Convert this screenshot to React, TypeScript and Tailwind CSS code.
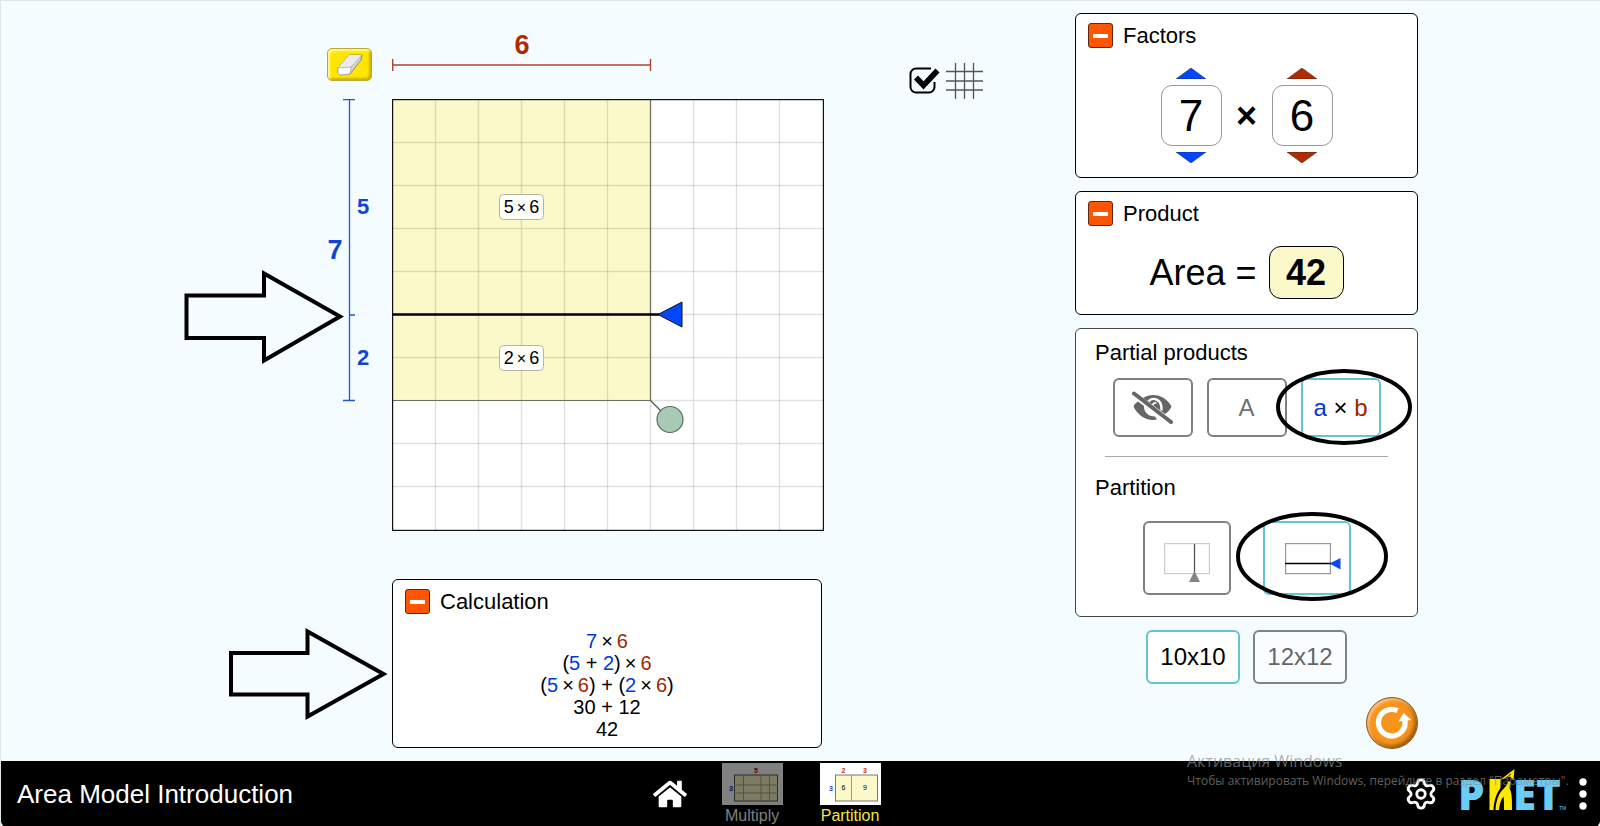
import { useState, type ReactNode } from "react";
import { FaHome } from "react-icons/fa";
import { Settings } from "lucide-react";

const CELL = 43;
const BLUE = "#0047ff";
const RED = "#b02b00";

function CollapseButton({ label }: { label: string }) {
  return (
    <button
      type="button"
      aria-label={`Collapse ${label}`}
      className="flex h-[25px] w-[25px] items-center justify-center rounded-[3px] border border-[#5a2a10] bg-[#ff5500]"
    >
      <span className="h-1 w-[15px] bg-white" />
    </button>
  );
}

function Panel({ title, children }: { title: string; children: ReactNode }) {
  return (
    <section className="rounded-md border border-black bg-white px-3 pt-[9px]">
      <div className="flex items-center gap-[10px]">
        <CollapseButton label={title} />
        <h2 className="text-[22px] leading-[25px]">{title}</h2>
      </div>
      {children}
    </section>
  );
}

function Spinner({ label, value, color }: { label: string; value: number; color: string }) {
  return (
    <div className="flex flex-col items-center gap-[6px]">
      <button type="button" aria-label={`Increase ${label}`}>
        <svg width="30" height="11" viewBox="0 0 30 11" className="block">
          <path d="M15 0 30 11H0Z" fill={color} stroke="#222" strokeWidth="0.5" />
        </svg>
      </button>
      <output
        aria-label={label}
        className="flex h-[61px] w-[61px] items-center justify-center rounded-[11px] border border-[#999] text-[44px] leading-none"
      >
        {value}
      </output>
      <button type="button" aria-label={`Decrease ${label}`}>
        <svg width="30" height="11" viewBox="0 0 30 11" className="block">
          <path d="M15 11 30 0H0Z" fill={color} stroke="#222" strokeWidth="0.5" />
        </svg>
      </button>
    </div>
  );
}

function A({ children }: { children: ReactNode }) {
  return <span className="text-[#0038d8]">{children}</span>;
}

function B({ children }: { children: ReactNode }) {
  return <span className="text-[#a02600]">{children}</span>;
}

function Times() {
  return <span className="mx-1">×</span>;
}

function EraserButton() {
  return (
    <button
      type="button"
      aria-label="Erase"
      className="flex h-[33px] w-[45px] items-center justify-center rounded-[5px] border border-[#b9a93c] bg-[#ffe600] shadow-[inset_2px_2px_2px_#fff799,inset_-2px_-2px_2px_#c9b400]"
    >
      <svg width="26" height="22" viewBox="0 0 26 22">
        <path d="M1 14 12 1 25 1 24 6 13 20 3 21 1 19Z" fill="#d4d4d4" stroke="#777" strokeWidth="0.8" strokeLinejoin="round" />
        <path d="M1 14 12 1 25 1 14 13Z" fill="#ebebeb" />
        <path d="M1 14 14 13 13 20 3 21 1 19Z" fill="#fff" stroke="#999" strokeWidth="0.6" />
        <path d="M14 13 25 1" stroke="#999" strokeWidth="0.6" />
      </svg>
    </button>
  );
}

function WidthRuler() {
  return (
    <svg viewBox="0 0 432 98" className="block w-full">
      <g stroke="#b0442a" strokeWidth="1.4">
        <path d="M0.5 64H259M0.7 58V70M258.5 58V70" />
      </g>
      <text x="130" y="53" textAnchor="middle" fontSize="27" fontWeight="bold" fill={RED}>6</text>
    </svg>
  );
}

function HeightRuler() {
  return (
    <svg viewBox="0 0 210 432" className="block w-full">
      <path
        d="M4.500 196.500H82V174.500L158 217.500 82 261.500V239H4.500Z"
        fill="none"
        stroke="#000"
        strokeWidth="4"
      />
      <path d="M167.500 1V302M161 0.700H173M167.500 216H173M161 301.500H173" stroke="#2058c8" strokeWidth="1.3" />
      <g fill="#0f45d6" fontWeight="bold" textAnchor="middle">
        <text x="181" y="115" fontSize="22">5</text>
        <text x="153" y="160" fontSize="27">7</text>
        <text x="181" y="266" fontSize="22">2</text>
      </g>
    </svg>
  );
}

function ProductTag({ y, children }: { y: number; children: ReactNode }) {
  return (
    <g>
      <rect x="107.500" y={y - 12.5} width="44" height="25" rx="4" fill="#fff" fillOpacity="0.9" stroke="#b5b5a5" />
      <text x="129.500" y={y + 6} textAnchor="middle" fontSize="18">
        {children}
      </text>
    </g>
  );
}

function Board({ gridVisible }: { gridVisible: boolean }) {
  const lines = [1, 2, 3, 4, 5, 6, 7, 8, 9];
  return (
    <svg viewBox="0 0 432 432" className="block w-full">
      <rect x="0.500" y="0.500" width="431" height="431" fill="#fff" />
      <rect x="0.500" y="0.500" width="258" height="301" fill="#fbf8c9" />
      {gridVisible && (
        <g stroke="#000" strokeOpacity="0.12" strokeWidth="1.4">
          {lines.map((n) => (
            <path key={n} d={`M${n * CELL + 0.5} 0V431M0 ${n * CELL + 0.5}H431`} />
          ))}
        </g>
      )}
      <path d="M258.500 0V301.500H0" fill="none" stroke="#6f6f60" strokeWidth="1.2" />
      <rect x="0.600" y="0.600" width="430.800" height="430.800" fill="none" stroke="#111" strokeWidth="1.2" />
      <path d="M0 215.500H268" stroke="#000" strokeWidth="2.400" />
      <path d="M266 215.500 290 203V228Z" fill={BLUE} stroke="#111" strokeWidth="1" />
      <path d="M258.500 301.500 269 312" stroke="#555" strokeWidth="1.2" />
      <circle cx="278" cy="320.500" r="13" fill="#a9c9b7" stroke="#5c6b62" strokeWidth="1.2" />
      <ProductTag y={108}>
        5<tspan dx="3" fontSize="16">×</tspan>
        <tspan dx="3">6</tspan>
      </ProductTag>
      <ProductTag y={259}>
        2<tspan dx="3" fontSize="16">×</tspan>
        <tspan dx="3">6</tspan>
      </ProductTag>
    </svg>
  );
}

function GridToggle({ checked, onChange }: { checked: boolean; onChange: (v: boolean) => void }) {
  return (
    <label className="flex items-center gap-1">
      <input
        type="checkbox"
        aria-label="Show grid"
        checked={checked}
        onChange={(e) => onChange(e.target.checked)}
        className="sr-only"
      />
      <svg width="33" height="38" viewBox="0 0 33 38">
        <path d="M22 6.500H7A5.500 5.500 0 0 0 1.500 12V25A5.500 5.500 0 0 0 7 30.500H20A5.500 5.500 0 0 0 25.500 25V20" fill="none" stroke="#000" strokeWidth="2" />
        {checked && <path d="M7 15.500 14.500 23.500 28.500 8.500" fill="none" stroke="#000" strokeWidth="5.500" />}
      </svg>
      <svg width="37" height="38" viewBox="0 0 37 38">
        <path d="M9.500 1V37M18.500 1V37M27.500 1V37M0 9.500H37M0 19H37M0 28H37" stroke="#555" strokeWidth="1.300" />
      </svg>
    </label>
  );
}

function CalculationPanel() {
  return (
    <div className="w-[430px]">
      <Panel title="Calculation">
        <div className="mt-4 pb-[7px] text-center text-[20px] leading-[22px]">
          <p><A>7</A><Times /><B>6</B></p>
          <p>(<A>5</A> + <A>2</A>)<Times /><B>6</B></p>
          <p>(<A>5</A><Times /><B>6</B>) + (<A>2</A><Times /><B>6</B>)</p>
          <p>30 + 12</p>
          <p>42</p>
        </div>
      </Panel>
    </div>
  );
}

function HiddenIcon() {
  return (
    <svg width="41" height="34" viewBox="0 0 41 34">
      <path d="M11 7C21 0.500 34 5 39.500 15.500C38 18.500 36 21 33 23L11 7Z" fill="#666" />
      <path d="M16.500 10.500C20 5.500 30.500 7.500 29.500 19.500" fill="none" stroke="#fff" strokeWidth="2.400" />
      <path d="M20.500 14.500A3.500 3.500 0 0 1 24.500 12" fill="none" stroke="#fff" strokeWidth="1.600" />
      <path d="M6 10.500C3.500 12 2.500 13.500 1.500 15.500C6 25 15 30.500 25 28.500L23 25.500C16 25.500 11.500 20.500 12 15Z" fill="#666" />
      <path d="M2 2.500 39 31" stroke="#666" strokeWidth="4" strokeLinecap="round" />
    </svg>
  );
}

function OptionsPanel() {
  return (
    <section className="rounded-md border border-[#444] bg-white pt-[10px] pb-[21px]">
      <h2 className="pl-[19px] text-[22px] leading-7">Partial products</h2>
      <div className="mt-[11px] flex justify-center gap-[14px]">
        <button type="button" aria-label="Hide partial products" className="flex h-[59px] w-20 items-center justify-center rounded-md border-2 border-[#808080]">
          <HiddenIcon />
        </button>
        <button type="button" className="h-[59px] w-20 rounded-md border-2 border-[#808080] text-[24px] text-[#707070]">
          A
        </button>
        <div className="relative">
          <button type="button" className="h-[59px] w-20 rounded-md border-2 border-[#66c3d0] text-[24px]">
            <A>a</A> × <B>b</B>
          </button>
          <svg width="136" height="76" viewBox="0 0 136 76" className="pointer-events-none absolute -top-[9px] -left-[25px] max-w-none">
            <ellipse cx="68" cy="38" rx="66" ry="36" fill="none" stroke="#000" strokeWidth="4" />
          </svg>
        </div>
      </div>
      <hr className="mx-[29px] mt-[19px] border-[#aaa]" />
      <h2 className="mt-[17px] pl-[19px] text-[22px] leading-7">Partition</h2>
      <div className="mt-[19px] flex justify-center gap-8">
        <button type="button" aria-label="Vertical partition" className="flex h-[74px] w-[88px] justify-center rounded-md border-2 border-[#808080] pt-5">
          <svg width="46" height="40" viewBox="0 0 46 40">
            <rect x="0.600" y="0.600" width="44.800" height="30" fill="none" stroke="#ccc" strokeWidth="1.200" />
            <path d="M30.500 1V30" stroke="#555" strokeWidth="1.300" />
            <path d="M30.500 28 36 39H25Z" fill="#848484" />
          </svg>
        </button>
        <div className="relative">
          <button type="button" aria-label="Horizontal partition" className="flex h-[74px] w-[88px] rounded-md border-2 border-[#66c3d0] pt-5 pl-5">
            <svg width="56" height="32" viewBox="0 0 56 32">
              <rect x="0.600" y="0.600" width="44.800" height="30" fill="none" stroke="#999" strokeWidth="1.200" />
              <path d="M0 20.500H46" stroke="#000" strokeWidth="1.400" />
              <path d="M44.500 20.500 55.500 15V26.500Z" fill="#0a48f0" />
            </svg>
          </button>
          <svg width="152" height="89" viewBox="0 0 152 89" className="pointer-events-none absolute -top-[9px] -left-[27px] max-w-none">
            <ellipse cx="76" cy="44.500" rx="74" ry="42.500" fill="none" stroke="#000" strokeWidth="4" />
          </svg>
        </div>
      </div>
    </section>
  );
}

function ResetButton() {
  return (
    <button
      type="button"
      aria-label="Reset all"
      className="h-[52px] w-[52px] rounded-full border border-[#8a5a20] bg-[#f7941d] shadow-[inset_2px_2px_3px_#fbc286,inset_-2px_-2px_4px_#8f5208]"
    >
      <svg width="50" height="50" viewBox="1 1 50 50">
        <path d="M31.500 13.700A13.300 13.300 0 1 0 38.800 23" fill="none" stroke="#fff" strokeWidth="5.300" />
        <path d="M37.500 16 45.500 23 32.500 24.500Z" fill="#fff" />
      </svg>
    </button>
  );
}

function MultiplyThumb() {
  return (
    <svg width="61" height="42" viewBox="0 0 61 42" className="opacity-50">
      <rect width="61" height="42" fill="#fff" />
      <rect x="12.500" y="12" width="43" height="26" fill="#f9f6c4" stroke="#555" />
      <path d="M21.500 12V38M39 12V38M47.500 12V38M12 22H56M12 30H56" stroke="#aaa68a" />
      <text x="34" y="10" fontSize="7" fontWeight="bold" textAnchor="middle" fill="#a00000">5</text>
      <text x="9" y="28" fontSize="7" fontWeight="bold" textAnchor="middle" fill="#0020b0">3</text>
    </svg>
  );
}

function PartitionThumb() {
  return (
    <svg width="61" height="42" viewBox="0 0 61 42">
      <rect width="61" height="42" fill="#fff" />
      <rect x="15.500" y="12" width="42" height="26" fill="#fbf8c9" stroke="#777" />
      <path d="M31.500 12V38" stroke="#999" />
      <g fontSize="7" textAnchor="middle">
        <text x="23.500" y="10" fontWeight="bold" fill="#c03010">2</text>
        <text x="45" y="10" fontWeight="bold" fill="#c03010">3</text>
        <text x="11" y="28" fontWeight="bold" fill="#1040d0">3</text>
        <text x="23.500" y="27">6</text>
        <text x="45" y="27">9</text>
      </g>
    </svg>
  );
}

function PhetLogo() {
  return (
    <svg width="106" height="56" viewBox="0 0 106 56" role="img" aria-label="PhET" className="overflow-visible">
      <g fontFamily="'Open Sans', sans-serif" fontWeight="800" fontSize="42" fill="#6acdf5">
        <text x="-3" y="42">P</text>
        <text x="52" y="42">E</text>
        <text x="75" y="42">T</text>
      </g>
      {/* figure holding up a pennant */}
      <path d="M28.500 42V11H39.500V20C35 26 33 33 32.500 42Z" fill="#ffe800" />
      <path d="M34.500 42C35 34 37 27 41 22.500C44.500 19 46.500 16.500 47.500 13L49.500 14C49 16.500 48.500 18 48.700 20.500C51 25 51 31 51 42H43C43 36 43 32 42.500 28.500C40 31.500 38.500 36 38 42Z" fill="#ffe800" />
      <path d="M39 12 53.500 1 52.500 12.500 49 8.500Z" fill="#ffe800" />
      <path d="M42 12 50 6" stroke="#000" strokeWidth="0.800" />
      <text x="98" y="42" fontSize="5" fill="#6acdf5">TM</text>
    </svg>
  );
}

function Footer() {
  return (
    <footer className="relative grid min-h-[65px] grid-cols-[41%_1fr_auto] rounded-b-md bg-black">
      <h1 className="self-center pl-4 text-[26px] leading-8 text-white">Area Model Introduction</h1>
      <nav className="flex">
        <a href="#home" aria-label="Home" className="mr-[35px] -ml-1 self-center text-white">
          <FaHome className="h-[34px] w-[34px]" />
        </a>
        <a href="#multiply" className="mr-[37px] flex flex-col items-center pt-[2px] text-[16px] leading-[22px] text-[#808080]">
          <MultiplyThumb />
          Multiply
        </a>
        <a href="#partition" className="flex flex-col items-center pt-[2px] text-[16px] leading-[22px] text-[#f2e53c]">
          <PartitionThumb />
          Partition
        </a>
      </nav>
      <div className="flex items-start pt-[7px] pr-[13px]">
        <button type="button" aria-label="Preferences" className="mt-[9px] mr-[23px] text-white">
          <Settings size={34} strokeWidth={2} className="block" />
        </button>
        <a href="#phet">
          <PhetLogo />
        </a>
        <button type="button" aria-label="Menu" className="mt-[10px] ml-3">
          <svg width="8" height="32" viewBox="0 0 8 32" fill="#fff" className="block">
            <circle cx="4" cy="4" r="3.700" />
            <circle cx="4" cy="16" r="3.700" />
            <circle cx="4" cy="28" r="3.700" />
          </svg>
        </button>
      </div>
      {/* OS activation notice floats above the bar */}
      <div className="pointer-events-none absolute -top-3 right-[25px] w-[388px] font-['Open_Sans',sans-serif] whitespace-nowrap text-[#8c8c8c]/70">
        <p className="text-[16px] leading-6">Активация Windows</p>
        <p className="text-[12px] leading-4">Чтобы активировать Windows, перейдите в раздел "Параметры".</p>
      </div>
    </footer>
  );
}

export default function App() {
  const [gridVisible, setGridVisible] = useState(true);

  return (
    <div className="flex min-h-screen flex-col border-t border-l border-[#dfe6e8] bg-[#f4fcff] font-['Liberation_Sans',Arial,sans-serif] text-black">
      <main className="flex flex-1 justify-center pr-px">
        <div className="grid grid-cols-[210px_432px] content-start">
          <div className="flex justify-end pt-[47px] pr-5">
            <EraserButton />
          </div>
          <WidthRuler />
          <HeightRuler />
          <Board gridVisible={gridVisible} />
          <svg viewBox="0 0 210 169" className="mt-12 block w-full">
            <path d="M49 74H125.500V52.500L201.500 95 125.500 137.500V115.500H49Z" fill="none" stroke="#000" strokeWidth="4" />
          </svg>
          <div className="mt-12">
            <CalculationPanel />
          </div>
        </div>

        <div className="mr-[92px] ml-[85px] pt-[61px]">
          <GridToggle checked={gridVisible} onChange={setGridVisible} />
        </div>

        <div className="flex w-[343px] flex-col gap-[13px] pt-3 pb-3">
          <Panel title="Factors">
            <div className="mt-5 flex items-center justify-center pb-[14px]">
              <Spinner label="first factor" value={7} color={BLUE} />
              <span className="w-[50px] text-center text-[36px] leading-none font-bold">×</span>
              <Spinner label="second factor" value={6} color={RED} />
            </div>
          </Panel>
          <Panel title="Product">
            <div className="mt-5 flex items-center justify-center gap-3 pb-[15px] text-[36px] leading-none">
              <span>Area =</span>
              <output className="flex h-[53px] w-[75px] items-center justify-center rounded-xl border border-black bg-[#fbf8c9] font-bold">
                42
              </output>
            </div>
          </Panel>
          <OptionsPanel />
          <div className="flex justify-center gap-[13px]">
            <button type="button" className="h-[54px] w-[94px] rounded-md border-2 border-[#66c3d0] bg-white text-[24px]">
              10x10
            </button>
            <button type="button" className="h-[54px] w-[94px] rounded-md border-2 border-[#808486] bg-[#fafdff] text-[24px] text-[#666]">
              12x12
            </button>
          </div>
          <div className="flex justify-end">
            <ResetButton />
          </div>
        </div>
      </main>
      <Footer />
    </div>
  );
}
